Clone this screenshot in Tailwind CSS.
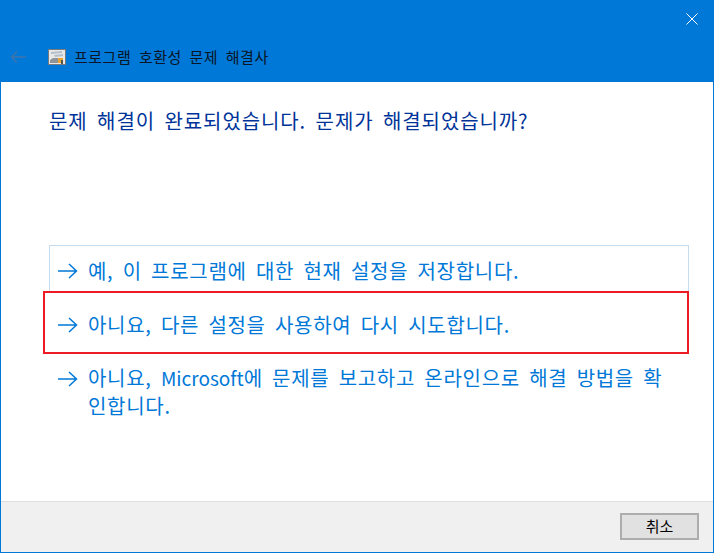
<!DOCTYPE html>
<html lang="ko">
<head>
  <meta charset="UTF-8" />
  <title>프로그램 호환성 문제 해결사</title>
  <script src="https://cdn.jsdelivr.net/npm/@tailwindcss/browser@4"></script>
</head>
<body class="bg-white">
  <div class="w-[714px] h-[553px] flex flex-col border border-[#0078d7] border-t-0 font-['Noto_Sans_CJK_KR','Noto_Sans',sans-serif] overflow-hidden">
    <!-- title bar -->
    <header class="h-[82px] shrink-0 bg-[#0078d7] relative">
      <svg class="absolute left-[684px] top-[12px]" width="14" height="14" viewBox="0 0 14 14" fill="none" stroke="#fff" stroke-width="1"><path d="M1.5 1.5l11 11M12.5 1.5l-11 11"/></svg>
      <div class="flex items-center pl-[9px] pt-[47px]">
        <svg width="18" height="14" viewBox="0 0 18 14" fill="none" stroke="#3f74ad" stroke-width="1.5"><path d="M1.5 7H16M7 1.5L1.5 7 7 12.5"/></svg>
        <svg class="ml-[20px]" width="18" height="16" viewBox="0 0 18 16">
          <rect x="0.5" y="0.5" width="17" height="15" fill="#e8e8e6" stroke="#77797c"/>
          <path d="M3 3l11-1v2L3 5zM6 6l9-1v2L7 8z" fill="#b4bfcb"/>
          <path d="M2 14v-3l3-2h6v5z" fill="#8d949b"/>
          <rect x="10" y="9" width="5" height="5" fill="#eea52f"/>
          <rect x="13" y="11" width="2" height="4" fill="#55564f"/>
        </svg>
        <span class="ml-[8px] text-[15px] leading-[20px] tracking-[0.5px] [word-spacing:3px] text-[#0a1526]">프로그램 호환성 문제 해결사</span>
      </div>
    </header>

    <!-- body -->
    <main class="flex-1 relative pl-[48px] pr-[24px]">
      <h1 class="pt-[26px] h-[163px] text-[20px] leading-[26px] tracking-[0.9px] [word-spacing:3px] font-normal text-[#003399]">문제 해결이 완료되었습니다. 문제가 해결되었습니까?</h1>
      <div class="flex flex-col text-[20px] leading-[28px] tracking-[0.7px] [word-spacing:3px] text-[#0078d7]">
        <a class="h-[47px] flex items-center pl-[8px] pt-[5px] border border-[#c4dcef]">
          <svg class="shrink-0" width="20" height="16" viewBox="0 0 20 16" fill="none" stroke="#0078d7" stroke-width="1.5"><path d="M0 8h18.5M11 1l7.5 7-7.5 7"/></svg>
          <span class="ml-[10px]">예, 이 프로그램에 대한 현재 설정을 저장합니다.</span>
        </a>
        <a class="h-[59px] flex items-center pl-[9px] pt-[7px]">
          <svg class="shrink-0" width="20" height="16" viewBox="0 0 20 16" fill="none" stroke="#0078d7" stroke-width="1.5"><path d="M0 8h18.5M11 1l7.5 7-7.5 7"/></svg>
          <span class="ml-[10px]">아니요, 다른 설정을 사용하여 다시 시도합니다.</span>
        </a>
        <a class="flex items-start pl-[9px] pt-[13px]">
          <svg class="shrink-0 mt-[7px]" width="20" height="16" viewBox="0 0 20 16" fill="none" stroke="#0078d7" stroke-width="1.5"><path d="M0 8h18.5M11 1l7.5 7-7.5 7"/></svg>
          <span class="ml-[10px] w-[590px]">아니요, <span class="text-[19px] tracking-normal">Microsoft</span>에 문제를 보고하고 온라인으로 해결 방법을 확인합니다.</span>
        </a>
      </div>
      <!-- red highlight drawn over the options -->
      <div class="absolute left-[42px] top-[209px] w-[646px] h-[63px] border-2 border-[#ed1c24]"></div>
    </main>

    <!-- footer -->
    <footer class="h-[51px] shrink-0 bg-[#f0f0f0] border-t border-[#dfdfdf] flex items-start justify-end pt-[11px] pr-[14px]">
      <button class="w-[79px] h-[27px] pb-[2px] bg-[#e1e1e1] border-2 border-[#adadad] text-[15px] leading-[20px] text-black">취소</button>
    </footer>
  </div>
</body>
</html>
